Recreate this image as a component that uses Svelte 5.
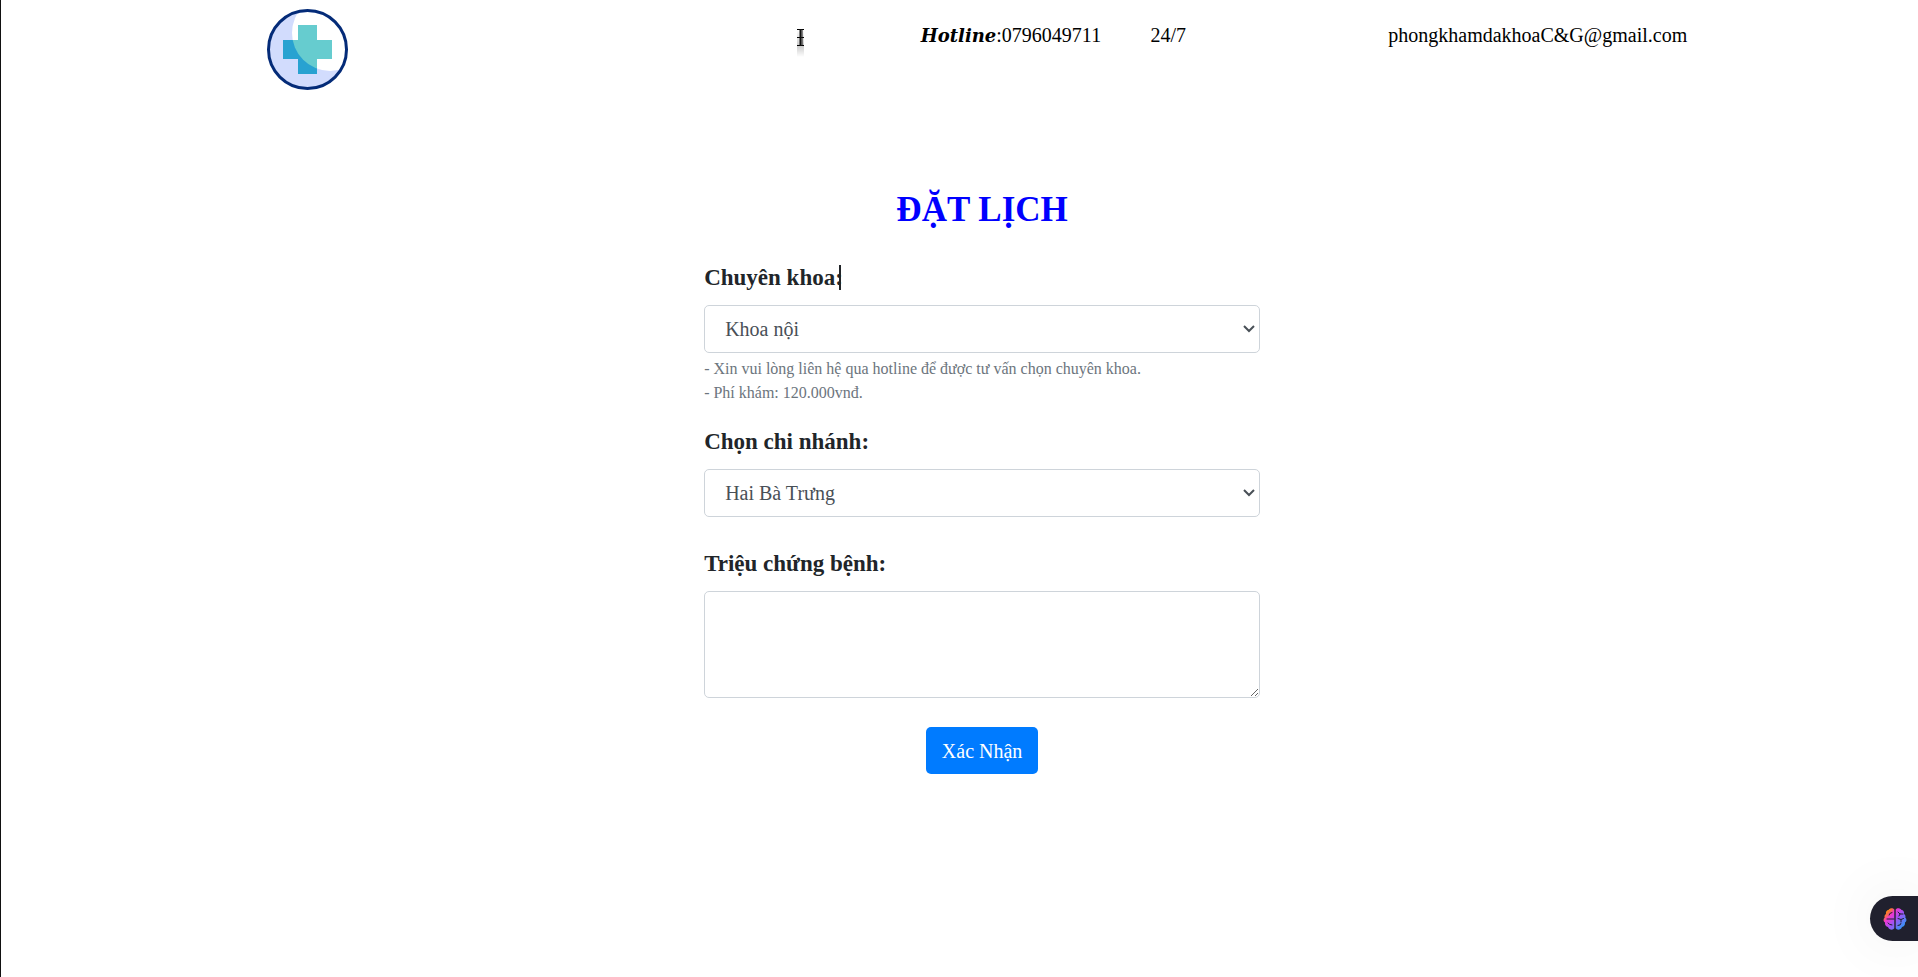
<script>
  let specialty = $state('Khoa nội');
  let branch = $state('Hai Bà Trưng');
  let symptoms = $state('');
</script>

<div class="page">
  <header>
    <a class="logo" href="/" aria-label="Trang chủ">
      <svg width="82" height="82" viewBox="0 0 82 82" aria-hidden="true">
        <defs>
          <clipPath id="disc"><circle cx="41" cy="41" r="38" /></clipPath>
          <clipPath id="shine"><circle cx="63" cy="24" r="38" /></clipPath>
        </defs>
        <circle cx="40.500" cy="40.500" r="38" fill="#d2dcfd" />
        <g clip-path="url(#disc)"><circle cx="63" cy="24" r="38" fill="#fff" /></g>
        <path d="M31 16h19v15h15v19h-15v15h-19v-15h-15v-19h15z" fill="#28a2d1" />
        <path d="M31 16h19v15h15v19h-15v15h-19v-15h-15v-19h15z" fill="#66cccf" clip-path="url(#shine)" />
        <circle cx="40.500" cy="40.500" r="39" fill="none" stroke="#042b78" stroke-width="3" />
      </svg>
    </a>
    <span class="item"><b>Hotline</b>:0796049711</span>
    <span class="item">24/7</span>
    <span class="item">phongkhamdakhoaC&amp;G@gmail.com</span>
  </header>

  <main>
    <h1>ĐẶT LỊCH</h1>
    <form onsubmit={(e) => e.preventDefault()}>
      <div class="group hinted">
        <label for="specialty">Chuyên khoa:<i class="caret"></i></label>
        <select id="specialty" bind:value={specialty}>
          <option>Khoa nội</option>
        </select>
        <div class="hints">
          <small>- Xin vui lòng liên hệ qua hotline để được tư vấn chọn chuyên khoa.</small>
          <small>- Phí khám: 120.000vnđ.</small>
        </div>
      </div>
      <div class="group">
        <label for="branch">Chọn chi nhánh:</label>
        <select id="branch" bind:value={branch}>
          <option>Hai Bà Trưng</option>
        </select>
      </div>
      <div class="group">
        <label for="symptoms">Triệu chứng bệnh:</label>
        <textarea id="symptoms" bind:value={symptoms}></textarea>
      </div>
      <button class="submit" type="submit">Xác Nhận</button>
    </form>
  </main>

  <svg class="pointer" width="7" height="28" viewBox="0 0 7 28" aria-hidden="true">
    <defs>
      <linearGradient id="fade" x1="0" y1="0" x2="0" y2="1">
        <stop offset="0" stop-color="#000" stop-opacity="0" />
        <stop offset=".6" stop-color="#000" stop-opacity=".2" />
        <stop offset="1" stop-color="#000" stop-opacity="0" />
      </linearGradient>
    </defs>
    <rect width="7" height="28" fill="url(#fade)" />
    <path d="M0 .5h7M0 8.500h7M0 16.500h7" stroke="#000" />
    <path d="M4 0v17" stroke="#111" stroke-width="3" />
    <path d="M4.500 1v7M4.500 9v7" stroke="#555" />
  </svg>

  <button class="dock" aria-label="Trợ lý">
    <svg width="24" height="24" viewBox="0 0 24 24" aria-hidden="true">
      <defs>
        <linearGradient id="mind" x1="2" y1="2" x2="22" y2="20" gradientUnits="userSpaceOnUse">
          <stop offset="0" stop-color="#ffb000" />
          <stop offset=".16" stop-color="#fb7a2c" />
          <stop offset=".32" stop-color="#ef35d2" />
          <stop offset=".58" stop-color="#9e55f5" />
          <stop offset="1" stop-color="#249df5" />
        </linearGradient>
      </defs>
      <path
        d="M11.300 2.500C10 .8 7 .8 5.800 2.800 3.600 3 2.500 5 3 7 1.500 7.800 1.200 9.500 1.700 10.500 0 12 .2 14.500 2 15.500c-.3 2.500 1 4 3 4.500 1 3 5 3.500 6.300 1.300zM12.700 2.500c1.300-1.700 4.300-1.700 5.500.3 2.200.2 3.300 2.200 2.800 4.200 1.500.8 1.800 2.500 1.300 3.500 1.700 1.500 1.500 4-.3 5 .3 2.500-1 4-3 4.500-1 3-5 3.500-6.300 1.300z"
        fill="url(#mind)"
      />
      <path
        d="M4 12h7M6 8q0-2 3-2.500M5 16q1 2 4 2M15 5l2 2h3M17 7l-1 2M15 11.500l3 1 2.500-1M18 12.500v2.500M15 18.500q3 0 3-2"
        fill="none"
        stroke="#20202e"
        stroke-linecap="round"
      />
    </svg>
  </button>
</div>

<style>
  :global(body) {
    margin: 0;
    background: #fff;
  }
  .page {
    box-sizing: border-box;
    min-height: 100vh;
    border-left: 1px solid #111;
    font: 20px/30px 'Liberation Serif', 'Times New Roman', serif;
    color: #212529;
  }
  header {
    display: grid;
    grid-template-columns: 654fr 230fr 238fr 300fr;
    align-items: start;
    padding: 9px 12% 0 13.9%;
    color: #000;
  }
  .logo {
    display: flex;
    width: 82px;
  }
  .item {
    padding-top: 11px;
    white-space: nowrap;
  }
  .item b {
    font-family: 'DejaVu Serif', serif;
    font-size: 18px;
    font-style: italic;
    line-height: 24px;
  }
  main {
    width: 29%;
    min-width: 320px;
    margin: 97px 0 0 36.68%;
  }
  h1 {
    margin: 0;
    font-size: 35px;
    line-height: 44px;
    text-align: center;
    color: #00f;
  }
  form {
    display: flex;
    flex-direction: column;
    margin-top: 28px;
  }
  .group {
    display: flex;
    flex-direction: column;
    margin-bottom: 29px;
  }
  .hinted {
    margin-bottom: 19px;
  }
  .hints {
    display: flex;
    flex-direction: column;
    padding-top: 4px;
  }
  label {
    align-self: flex-start;
    position: relative;
    margin-bottom: 9px;
    font-size: 23px;
    font-weight: bold;
    line-height: 36px;
  }
  .caret {
    position: absolute;
    right: 2px;
    top: 5px;
    width: 2px;
    height: 25px;
    background: #212529;
  }
  select,
  textarea {
    box-sizing: border-box;
    width: 100%;
    border: 1px solid #ced4da;
    border-radius: 5px;
    background: #fff;
    font: inherit;
    color: #495057;
  }
  select {
    appearance: none;
    height: 48px;
    padding: 0 20px;
    background: #fff
      url("data:image/svg+xml,%3Csvg xmlns='http://www.w3.org/2000/svg' width='12' height='8' fill='none' stroke='%23495057' stroke-width='2'%3E%3Cpath d='M1 1l5 5 5-5'/%3E%3C/svg%3E")
      no-repeat right 4px center;
  }
  textarea {
    height: 107px;
    padding: 8px 16px;
  }
  small {
    font-size: 16px;
    line-height: 24px;
    color: #6c757d;
  }
  .submit {
    align-self: center;
    height: 47px;
    padding: 0 16px;
    border: 0;
    border-radius: 5px;
    background: #007bff;
    font: inherit;
    color: #fff;
  }
  .pointer {
    position: absolute;
    left: 797px;
    top: 29px;
  }
  .dock {
    position: fixed;
    right: 0;
    bottom: 36px;
    display: flex;
    align-items: center;
    width: 48px;
    height: 45px;
    padding: 0 0 0 13px;
    border: 0;
    border-radius: 23px 0 0 23px;
    background: #20202e;
    box-shadow: 0 0 60px rgba(0, 0, 0, 0.08);
  }
</style>
